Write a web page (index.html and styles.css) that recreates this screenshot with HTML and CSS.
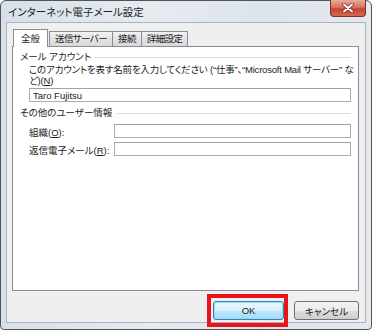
FILE: index.html
```html
<!DOCTYPE html>
<html lang="ja">
<head>
  <meta charset="UTF-8" />
  <title>インターネット電子メール設定</title>
  <link rel="stylesheet" href="styles.css">
</head>
<body>
  <div class="window">
    <div class="titlebar">
      <span class="title">インターネット電子メール設定</span>
      <span class="close">
        <svg width="14" height="10" viewBox="0 0 14 10">
          <path d="M3 1.5 L11 8.5 M11 1.5 L3 8.5" stroke="#6b2a20" stroke-width="3.6" stroke-linecap="round" />
          <path d="M3 1.5 L11 8.5 M11 1.5 L3 8.5" stroke="#fff" stroke-width="2" stroke-linecap="round" />
        </svg>
      </span>
    </div>

    <div class="client">
      <div class="tabs">
        <span class="tab active">全般</span>
        <span class="tab">送信サーバー</span>
        <span class="tab">接続</span>
        <span class="tab">詳細設定</span>
      </div>

      <div class="panel">
        <div class="group">
          <div class="group-title"><span>メール アカウント</span></div>
          <div class="group-body">
            <label class="desc">このアカウントを表す名前を入力してください (“仕事”、“Microsoft Mail サーバー” な<br>ど)(<u>N</u>)</label>
            <input class="field" type="text" value="Taro Fujitsu">
          </div>
        </div>

        <div class="group second">
          <div class="group-title"><span>その他のユーザー情報</span></div>
          <div class="group-body rows">
            <label>組織(<u>O</u>):</label>
            <input class="field" type="text">
            <label>返信電子メール(<u>R</u>):</label>
            <input class="field" type="text">
          </div>
        </div>
      </div>

      <div class="buttons">
        <span class="ok-wrap">
          <button class="btn default">OK</button>
          <span class="highlight"></span>
        </span>
        <button class="btn cancel">キャンセル</button>
      </div>
    </div>
  </div>
</body>
</html>
```

FILE: styles.css
```css
* {
  margin: 0;
  padding: 0;
  box-sizing: border-box;
}
body {
  width: 372px;
  height: 330px;
  overflow: hidden;
  background: #fff;
  font-family: "Liberation Sans", "Noto Sans CJK JP", sans-serif;
  font-size: 9.5px;
  font-feature-settings: "palt";
  color: #1b1b1b;
}
.window {
  height: 330px;
  border: 1px solid #50555c;
  border-radius: 6px 6px 4px 4px;
  background: linear-gradient(90deg, #d7dfe8, #e6ebf0 40%, #dde4eb 70%, #e4e9ee);
  padding: 0 5px 6px;
}
.titlebar {
  height: 21px;
  display: flex;
  align-items: center;
}
.title {
  padding-left: 2px;
  font-size: 10.5px;
  color: #1e1e1e;
}
.close {
  margin-left: auto;
  align-self: flex-start;
  margin-top: -1px;
  width: 36px;
  height: 17px;
  display: flex;
  align-items: center;
  justify-content: center;
  border: 1px solid #7a3226;
  border-top: none;
  border-radius: 0 0 4px 4px;
  background: linear-gradient(#e9a99a, #d97462 45%, #c4442c 55%, #d5674f);
}
.client {
  border: 1px solid #aab4c0;
  background: #efefef;
  padding: 6px 6px 2px 5px;
}
.tabs {
  display: flex;
  align-items: flex-end;
  height: 17px;
  padding-left: 1px;
}
.tab {
  height: 15px;
  line-height: 14px;
  padding: 0 5px;
  border: 1px solid #898c95;
  border-bottom: none;
  margin-left: -1px;
  letter-spacing: -0.6px;
  white-space: nowrap;
  background: linear-gradient(#f3f3f3, #e3e3e3 50%, #d9d9d9);
}
.tab.active {
  height: 18px;
  line-height: 17px;
  margin-left: 0;
  margin-right: 2px;
  padding: 0 7px;
  margin-bottom: -1px;
  letter-spacing: 0;
  background: #fff;
  position: relative;
  z-index: 1;
}
.panel {
  height: 245px;
  border: 1px solid #898c95;
  background: #fff;
  padding: 4px 7px 0;
}
.group-title {
  display: flex;
  align-items: center;
  line-height: 12px;
  white-space: nowrap;
}
.group-title::after {
  content: "";
  flex: 1;
  margin-left: 4px;
  border-top: 1px solid #d5dfe5;
}
.group.second {
  margin-top: 5px;
}
.group-body {
  margin-left: 9px;
}
.desc {
  display: block;
  margin-top: 1px;
  line-height: 11px;
  letter-spacing: -0.2px;
  white-space: nowrap;
}
.field {
  display: block;
  width: 100%;
  height: 14px;
  margin-top: 2px;
  border: 1px solid #abadb3;
  border-top-color: #a0a3aa;
  padding: 0 3px;
  font: inherit;
  font-feature-settings: "palt";
  color: #1b1b1b;
  outline: none;
}
.rows {
  display: grid;
  grid-template-columns: 85px 1fr;
  row-gap: 2px;
  align-items: center;
  margin-top: 4px;
}
.rows .field {
  margin-top: 0;
}
.rows label {
  padding-top: 2px;
  white-space: nowrap;
}
.buttons {
  display: flex;
  justify-content: flex-end;
  align-items: center;
  gap: 10px;
  margin-top: 10px;
}
.ok-wrap {
  position: relative;
  display: flex;
}
.btn {
  height: 19px;
  border: 1px solid #707070;
  border-radius: 3px;
  font: inherit;
  font-feature-settings: "palt";
  color: #1b1b1b;
  background: linear-gradient(#f2f2f2, #ebebeb 50%, #dddddd 51%, #cfcfcf);
}
.btn.default {
  width: 71px;
  border-color: #3c7fb1;
  background: linear-gradient(#eaf6fd, #d9f0fc 50%, #bee6fd 51%, #a7d9f5);
  box-shadow: inset 0 0 0 1px #8ee0fb;
}
.btn.cancel {
  width: 65px;
}
.highlight {
  position: absolute;
  left: -6px;
  right: -4px;
  top: -7px;
  bottom: -7px;
  border: 4px solid #e8141b;
}
```
